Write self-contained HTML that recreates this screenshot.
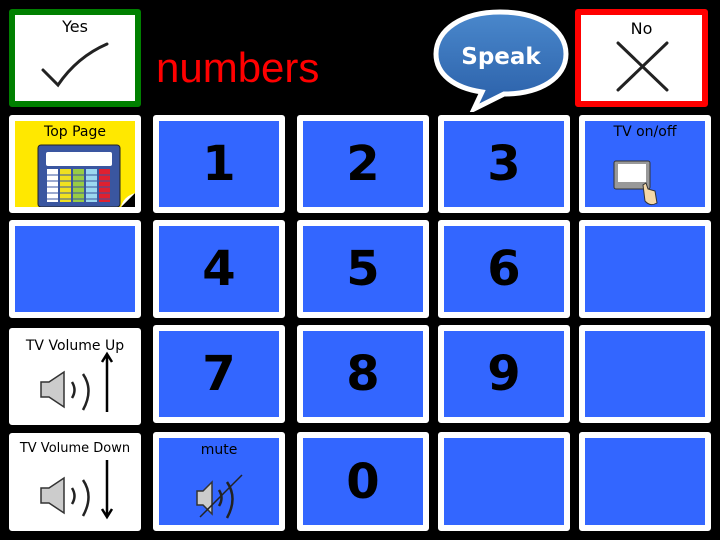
<!DOCTYPE html>
<html><head><meta charset="utf-8"><style>
body{margin:0;width:720px;height:540px;background:#000;position:relative;overflow:hidden;font-family:"DejaVu Sans","Liberation Sans",sans-serif}
.c{position:absolute;background:#fff;border-radius:3px;box-sizing:border-box;border:6px solid #fff}
.b{background:#3366ff}
.n{display:flex;align-items:center;justify-content:center;font-size:48px;font-weight:bold;color:#000}
.lbl{position:absolute;left:0;right:0;text-align:center;font-size:14px;color:#000}
svg.i{position:absolute;left:0;top:0}
</style></head><body>
<div class="c" style="left:9px;top:9px;width:132px;height:98px;border-color:#008000">
 <div class="lbl" style="top:2px;font-size:16px">Yes</div>
 <svg class="i" width="120" height="86"><path d="M28 55 L43 70 Q62 42 92 29" fill="none" stroke="#222" stroke-width="3" stroke-linecap="round"/></svg>
</div>
<div style="position:absolute;left:156px;top:44px;color:#f00;font-family:'Liberation Sans',sans-serif;font-size:42px">numbers</div>
<svg style="position:absolute;left:432px;top:8px" width="140" height="104">
 <defs><linearGradient id="g" x1="0" y1="0" x2="0" y2="1"><stop offset="0" stop-color="#4a88cc"/><stop offset="1" stop-color="#2a5fa8"/></linearGradient></defs>
 <path d="M68 4 C108 4 134 22 134 46 C134 70 108 86 72 86 L42 101 L50 84 C22 80 4 66 4 46 C4 22 30 4 68 4Z" fill="url(#g)" stroke="#fff" stroke-width="5"/>
 <text x="69" y="56" text-anchor="middle" fill="#fff" font-size="23" font-weight="bold" font-family="DejaVu Sans">Speak</text>
</svg>
<div class="c" style="left:575px;top:9px;width:133px;height:98px;border-color:#f00">
 <div class="lbl" style="top:4px;font-size:16px">No</div>
 <svg class="i" width="121" height="86"><path d="M37 28 L86 75 M86 28 L37 75" stroke="#222" stroke-width="3" stroke-linecap="round"/></svg>
</div>

<div class="c" style="left:9px;top:115px;width:132px;height:98px;background:#ffe800">
 <div class="lbl" style="top:3px">Top Page</div>
 <svg class="i" width="120" height="86">
  <rect x="23" y="24" width="82" height="62" rx="3" fill="#3a56a0" stroke="#222"/>
  <rect x="31" y="31" width="66" height="14" rx="2" fill="#fff"/>
  <g><rect x="32" y="48" width="11" height="33" fill="#fff"/><rect x="45" y="48" width="11" height="33" fill="#f0e020"/><rect x="58" y="48" width="11" height="33" fill="#9c4"/><rect x="71" y="48" width="11" height="33" fill="#9cd8f0"/><rect x="84" y="48" width="11" height="33" fill="#e02030"/></g>
  <g stroke="#3a56a0" stroke-width="1"><path d="M32 54H95M32 60H95M32 66H95M32 72H95M32 78H95"/></g>
  <path d="M120 72 L106 86 L120 86Z" fill="#000"/><path d="M120 72 Q108 76 106 86" fill="#fff"/>
 </svg>
</div>
<div class="c b" style="left:9px;top:220px;width:132px;height:98px"></div>
<div class="c" style="left:9px;top:328px;width:132px;height:97px">
 <div class="lbl" style="top:4px">TV Volume Up</div>
 <svg class="i" width="120" height="85"><path d="M26 48 L34 48 L49 38 L49 73 L34 63 L26 63Z" fill="#ccc" stroke="#333" stroke-width="1.5"/><path d="M57 48 Q62 56 57 64" fill="none" stroke="#222" stroke-width="2.5"/><path d="M68 40 Q79 56 68 76" fill="none" stroke="#222" stroke-width="2.5"/><path d="M92 78 L92 20 M87 28 L92 20 L97 28" fill="none" stroke="#000" stroke-width="2.5"/></svg>
</div>
<div class="c" style="left:9px;top:433px;width:132px;height:98px">
 <div class="lbl" style="top:2px;font-size:13px">TV Volume Down</div>
 <svg class="i" width="120" height="86"><path d="M26 49 L34 49 L49 39 L49 74 L34 64 L26 64Z" fill="#ccc" stroke="#333" stroke-width="1.5"/><path d="M57 49 Q62 57 57 65" fill="none" stroke="#222" stroke-width="2.5"/><path d="M68 41 Q79 57 68 77" fill="none" stroke="#222" stroke-width="2.5"/><path d="M92 21 L92 78 M87 70 L92 78 L97 70" fill="none" stroke="#000" stroke-width="2.5"/></svg>
</div>

<div class="c b n" style="left:153px;top:115px;width:132px;height:98px">1</div>
<div class="c b n" style="left:297px;top:115px;width:132px;height:98px">2</div>
<div class="c b n" style="left:438px;top:115px;width:132px;height:98px">3</div>
<div class="c b" style="left:579px;top:115px;width:132px;height:98px">
 <div class="lbl" style="top:3px">TV on/off</div>
 <svg class="i" width="120" height="86"><rect x="29" y="40" width="36" height="28" rx="2" fill="#999" stroke="#333"/><rect x="33" y="43" width="28" height="18" fill="#fff"/><path d="M58 64 L60 80 Q65 86 72 82 L70 70 L63 68 L61 62Z" fill="#f5d8a8" stroke="#333"/></svg>
</div>
<div class="c b n" style="left:153px;top:220px;width:132px;height:98px">4</div>
<div class="c b n" style="left:297px;top:220px;width:132px;height:98px">5</div>
<div class="c b n" style="left:438px;top:220px;width:132px;height:98px">6</div>
<div class="c b" style="left:579px;top:220px;width:132px;height:98px"></div>
<div class="c b n" style="left:153px;top:325px;width:132px;height:98px">7</div>
<div class="c b n" style="left:297px;top:325px;width:132px;height:98px">8</div>
<div class="c b n" style="left:438px;top:325px;width:132px;height:98px">9</div>
<div class="c b" style="left:579px;top:325px;width:132px;height:98px"></div>
<div class="c b" style="left:153px;top:432px;width:132px;height:99px">
 <div class="lbl" style="top:4px">mute</div>
 <svg class="i" width="120" height="87"><path d="M38 53 L44 53 L53 44 L53 76 L44 67 L38 67Z" fill="#ccc" stroke="#333" stroke-width="1.5"/><path d="M60 52 Q65 60 60 68" fill="none" stroke="#222" stroke-width="2.5"/><path d="M68 44 Q79 60 68 80" fill="none" stroke="#222" stroke-width="2.5"/><path d="M41 79 L83 37" stroke="#222" stroke-width="1.5"/></svg>
</div>
<div class="c b n" style="left:297px;top:432px;width:132px;height:99px">0</div>
<div class="c b" style="left:438px;top:432px;width:132px;height:99px"></div>
<div class="c b" style="left:579px;top:432px;width:132px;height:99px"></div>
</body></html>
